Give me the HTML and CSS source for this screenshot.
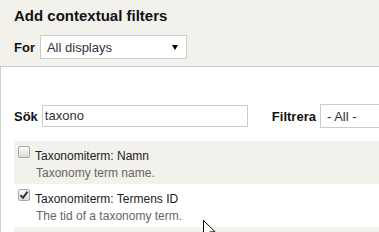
FILE: index.html
```html
<!DOCTYPE html>
<html>
<head>
<meta charset="utf-8">
<link rel="stylesheet" href="styles.css">
</head>
<body>
<div class="header">
  <h2 class="title">Add contextual filters</h2>
  <div class="for-row">
    <span class="lbl">For</span>
    <div class="select select-for"><span>All displays</span><svg class="arrow" width="6" height="5" viewBox="0 0 6 5"><path d="M0 0H6L3 5Z" fill="#000"/></svg></div>
  </div>
</div>
<div class="content">
  <div class="search-row">
    <span class="lbl">Sök</span>
    <div class="input">taxono</div>
    <span class="lbl filter-lbl">Filtrera</span>
    <div class="select select-all"><span>- All -</span></div>
  </div>
  <div class="list">
    <div class="row odd">
      <span class="cb"></span>
      <div class="txt">
        <div class="name">Taxonomiterm: Namn</div>
        <div class="desc">Taxonomy term name.</div>
      </div>
    </div>
    <div class="row">
      <span class="cb checked"><svg width="10" height="10" viewBox="0 0 10 10"><path d="M1.5 5.2L4 7.8L8.6 1.6" fill="none" stroke="#333" stroke-width="2"/></svg></span>
      <div class="txt">
        <div class="name">Taxonomiterm: Termens ID</div>
        <div class="desc">The tid of a taxonomy term.</div>
      </div>
    </div>
    <div class="row odd"></div>
  </div>
</div>
<svg class="cursor" width="13" height="20" viewBox="0 0 13 20"><path d="M0.5 0.5V16.5L4.3 12.8L6.8 18.6L9.2 17.6L6.8 11.9H12.2Z" fill="#fff" stroke="#000" stroke-width="1" stroke-linejoin="miter"/></svg>
</body>
</html>
```
FILE: styles.css
```css
html, body {
  margin: 0;
  padding: 0;
  overflow: hidden;
  width: 379px;
  height: 232px;
}
body {
  font-family: "Liberation Sans", Arial, sans-serif;
  color: #000;
  background: #fff;
  position: relative;
}
.header {
  background: #f2f1eb;
  border-bottom: 1px solid #cfcec8;
  height: 67px;
  box-sizing: border-box;
  padding: 6px 14px 0;
}
.title {
  margin: 0;
  font-size: 15px;
  line-height: 20px;
  font-weight: bold;
  color: #111;
}
.for-row {
  display: flex;
  align-items: center;
  gap: 5px;
  margin-top: 9px;
}
.lbl {
  font-size: 13px;
  font-weight: bold;
  color: #111;
  flex: none;
}
.select {
  box-sizing: border-box;
  height: 24px;
  border: 1px solid #cccccc;
  background: #fff;
  font-size: 13px;
  color: #333;
  display: flex;
  align-items: center;
  padding: 0 6px;
  flex: none;
}
.select-for {
  width: 147px;
  justify-content: space-between;
  padding-right: 8px;
}
.arrow {
  display: block;
  margin-top: 1px;
}
.content {
  border-left: 1px solid #cfcfcf;
  padding: 37px 0 0 13px;
  height: 165px;
  box-sizing: border-box;
  overflow: hidden;
}
.search-row {
  display: flex;
  align-items: center;
  height: 24px;
}
.input {
  box-sizing: border-box;
  width: 206px;
  height: 22px;
  margin-left: 4px;
  border: 1px solid #cccccc;
  font-size: 13px;
  line-height: 20px;
  padding: 0 2px;
  color: #333;
  flex: none;
}
.filter-lbl {
  margin-left: 24px;
}
.select-all {
  margin-left: 4px;
  width: 62px;
}
.list {
  margin-top: 13px;
}
.row {
  display: flex;
  align-items: flex-start;
  padding: 6px 0 3px 4px;
  height: 34px;
}
.row.odd {
  background: #f2f1eb;
}
.cb {
  box-sizing: border-box;
  width: 12px;
  height: 12px;
  margin-top: -1px;
  border: 1px solid #a8a8a8;
  border-radius: 2px;
  background: linear-gradient(#fdfdfd, #dcdcdc);
  display: flex;
  align-items: center;
  justify-content: center;
  flex: none;
}
.cb svg {
  display: block;
}
.txt {
  margin-left: 5px;
}
.name {
  font-size: 12px;
  line-height: 18px;
  color: #222;
}
.desc {
  font-size: 12px;
  line-height: 16px;
  color: #666;
  margin-left: 1px;
}
.cursor {
  position: absolute;
  left: 203px;
  top: 220px;
}
```
